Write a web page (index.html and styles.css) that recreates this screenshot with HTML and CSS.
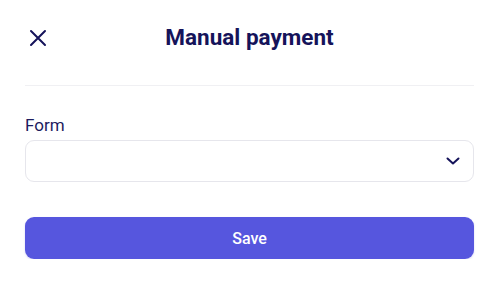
FILE: index.html
```html
<!DOCTYPE html>
<html lang="en">
<head>
    <meta charset="UTF-8">
    <meta name="viewport" content="width=device-width, initial-scale=1.0">
    <title>Manual payment</title>
    <link rel="stylesheet" href="styles.css">
</head>
<body>

    <div class="modal">
        <div class="header">
            <button type="button" class="close-btn" aria-label="Close">
                <svg width="24" height="24" viewBox="0 0 24 24" fill="none" stroke="#15135a" stroke-width="2" stroke-linecap="round">
                    <path d="M5 5L19 19M19 5L5 19"/>
                </svg>
            </button>
            <h1>Manual payment</h1>
            <span></span>
        </div>

        <div class="divider"></div>

        <div class="form-section">
            <label for="form">Form</label>
            <div class="select-box">
                <select id="form">
                    <option value=""></option>
                </select>
                <svg class="chevron" width="14" height="8" viewBox="0 0 14 8" fill="none" stroke="#15135a" stroke-width="2" stroke-linecap="round" stroke-linejoin="round">
                    <path d="M1.5 1.5L7 6.5L12.5 1.5"/>
                </svg>
            </div>

            <button type="button" class="save-btn">Save</button>
        </div>
    </div>

</body>
</html>
```

FILE: styles.css
```css
body {
    margin: 0;
    font-family: Roboto, "Liberation Sans", sans-serif;
    background-color: #ffffff;
    color: #15135a;
}

.modal {
    padding: 0 26px 0 25px;
}

.header {
    display: grid;
    grid-template-columns: 1fr auto 1fr;
    align-items: center;
    height: 50px;
    padding-top: 12px;
}

.close-btn {
    width: 24px;
    height: 24px;
    padding: 0;
    margin-left: 1px;
    margin-top: 2px;
    border: none;
    background: none;
    cursor: pointer;
}

.close-btn svg {
    display: block;
}

.header h1 {
    margin: 0 0 1px;
    font-size: 22.5px;
    font-weight: 700;
    color: #15135a;
}

.divider {
    height: 1px;
    margin-top: 23px;
    background-color: #f0f0f3;
}

.form-section {
    padding-top: 27px;
}

label {
    display: block;
    font-size: 17px;
    line-height: 24px;
    color: #1d1b5e;
    margin-bottom: 3px;
}

.select-box {
    position: relative;
}

select {
    width: 100%;
    height: 42px;
    padding: 0 16px;
    border: 1px solid #e6e6ec;
    border-radius: 9px;
    background-color: #ffffff;
    appearance: none;
    font-family: inherit;
    font-size: 16px;
}

.chevron {
    position: absolute;
    right: 14px;
    top: 17px;
}

.save-btn {
    display: block;
    width: 100%;
    height: 42px;
    margin-top: 35px;
    border: none;
    border-radius: 9px;
    background-color: #5656de;
    box-shadow: 0 1px 2px rgba(86, 86, 222, 0.25);
    color: #ffffff;
    font-family: inherit;
    font-size: 16px;
    font-weight: 500;
    cursor: pointer;
}
```
